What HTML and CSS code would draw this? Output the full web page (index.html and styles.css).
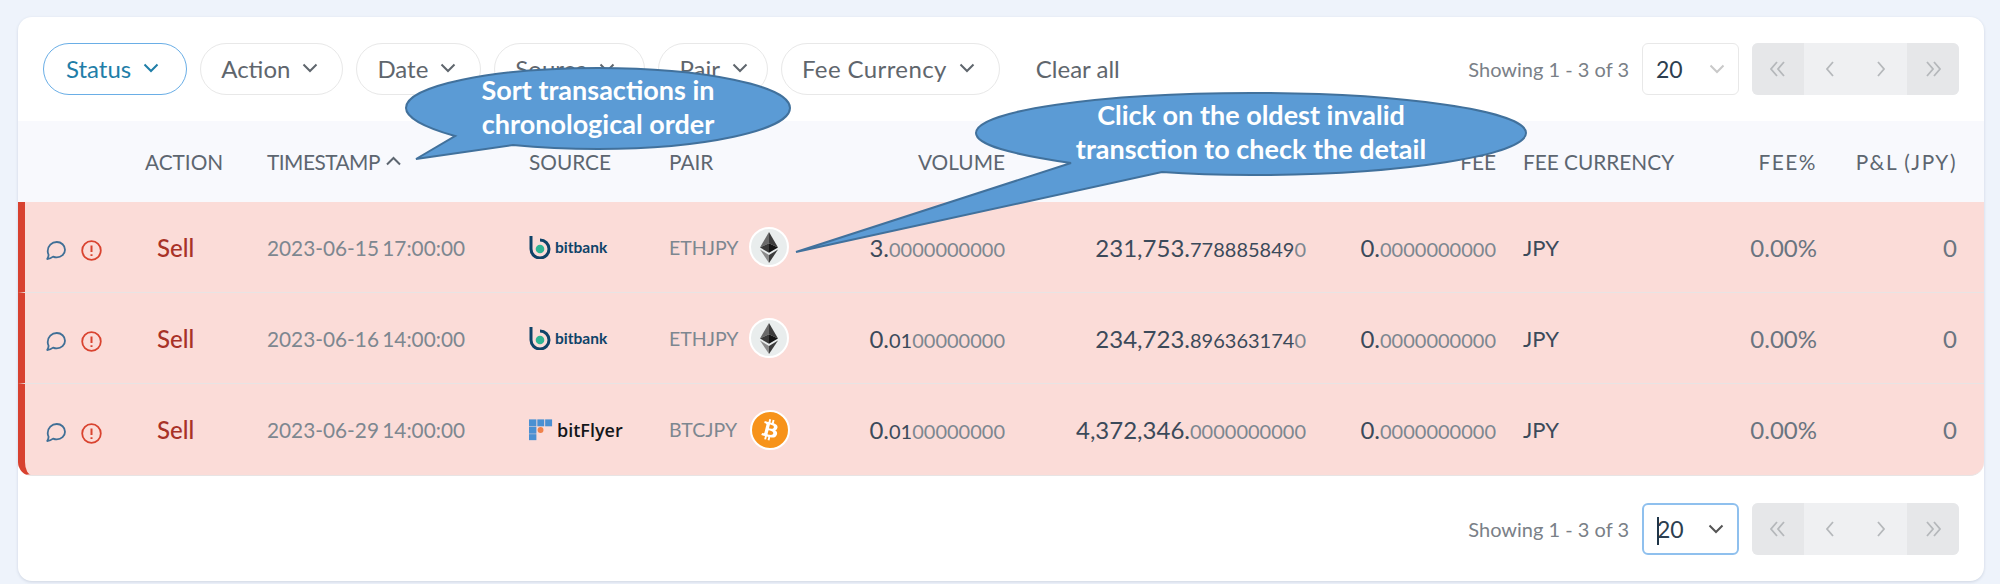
FILE: index.html
```html
<!DOCTYPE html>
<html>
<head>
    <meta charset="utf-8">
    <title>Transactions</title>
    <link rel="stylesheet" href="styles.css">
</head>
<body>
    <svg class="defs" width="0" height="0">
        <symbol id="chev" viewBox="0 0 16 10"><path d="M1.500 1.500 8 8l6.500-6.500" fill="none" stroke="currentColor" stroke-width="2"/></symbol>
        <symbol id="comment" viewBox="0 0 20 20"><path d="M10.800 1c4.500 0 8.200 3.400 8.200 7.700s-3.700 7.700-8.200 7.700c-1.300 0-2.600-.3-3.700-.8-1.600 1.300-3.500 2.200-5.900 2.400.9-1.300 1.300-2.700 1.400-4.100-.6-1.200-.9-2.600-.9-3.900C1.700 5.100 5.700 1 10.800 1z" fill="none" stroke="currentColor" stroke-width="1.800" stroke-linejoin="round"/></symbol>
        <symbol id="alert" viewBox="0 0 21 21"><circle cx="10.500" cy="10.500" r="9.300" fill="none" stroke="currentColor" stroke-width="1.800"/><path d="M10.500 5.500v6.500M10.500 14.200v1.800" stroke="currentColor" stroke-width="2"/></symbol>
        <symbol id="bitbank" viewBox="0 0 22 24"><path d="M2 1v13a9 9 0 1 0 9-9" fill="none" stroke="#0e4368" stroke-width="3"/><circle cx="11" cy="14" r="4.300" fill="#2fb594"/></symbol>
        <symbol id="bitflyer" viewBox="0 0 26 23">
            <rect x="0" y="0" width="8" height="7.500" fill="#4a90d2"/><rect x="9" y="0" width="7.500" height="7.500" fill="#4a90d2"/><rect x="17.500" y="0" width="7.500" height="7.500" fill="#4a90d2"/>
            <rect x="0" y="8" width="8" height="7.500" fill="#4a90d2"/><rect x="0" y="16" width="8" height="6.500" fill="#4a90d2"/>
            <circle cx="12.500" cy="11.500" r="3.200" fill="#f0824a"/>
        </symbol>
        <symbol id="eth" viewBox="0 0 18 31">
            <polygon points="9,0 0,15.500 9,11.200" fill="#6a6a6a"/><polygon points="9,0 18,15.500 9,11.200" fill="#3c3c3c"/>
            <polygon points="0,15.500 9,11.200 9,20.800" fill="#3a3a3a"/><polygon points="18,15.500 9,11.200 9,20.800" fill="#141414"/>
            <polygon points="0,17.500 9,31 9,23" fill="#8a8a8a"/><polygon points="18,17.500 9,31 9,23" fill="#3c3c3c"/>
        </symbol>
        <symbol id="btc" viewBox="0 0 24 24"><path fill="#fff" d="M17.288 10.291c.24-1.590-.974-2.450-2.640-3.030l.54-2.153-1.315-.33-.525 2.107c-.345-.087-.705-.167-1.064-.25l.526-2.127-1.320-.33-.54 2.165c-.285-.067-.565-.132-.84-.2l-1.815-.45-.35 1.407s.975.225.955.236c.535.136.63.486.615.766l-1.477 5.920c-.075.166-.24.406-.614.314.015.02-.96-.24-.96-.24l-.66 1.510 1.710.426.93.242-.54 2.190 1.320.327.54-2.170c.36.1.705.19 1.050.273l-.51 2.154 1.320.33.545-2.190c2.240.427 3.930.257 4.640-1.774.57-1.637-.03-2.580-1.217-3.196.854-.193 1.500-.76 1.680-1.930h.01zm-3.010 4.220c-.404 1.640-3.157.75-4.050.53l.72-2.900c.896.23 3.757.67 3.330 2.370zm.41-4.240c-.37 1.490-2.662.735-3.405.55l.654-2.640c.744.18 3.137.524 2.750 2.084v.006z"/></symbol>
    </svg>

    <div class="card">
        <div class="toolbar">
            <button class="pill active">Status <svg class="chev"><use href="#chev"/></svg></button>
            <button class="pill">Action <svg class="chev"><use href="#chev"/></svg></button>
            <button class="pill">Date <svg class="chev"><use href="#chev"/></svg></button>
            <button class="pill pill-source">Source <svg class="chev"><use href="#chev"/></svg></button>
            <button class="pill pill-pair">Pair <svg class="chev"><use href="#chev"/></svg></button>
            <button class="pill pill-fee">Fee Currency <svg class="chev"><use href="#chev"/></svg></button>
            <span class="clear">Clear all</span>
            <div class="paging">
                <span class="showing">Showing 1 - 3 of 3</span>
                <div class="size">20 <svg class="chev"><use href="#chev"/></svg></div>
                <div class="pager">
                    <span class="end"><svg viewBox="0 0 18 16"><path d="M8 1 2 8l6 7M15 1 9 8l6 7"/></svg></span>
                    <span><svg viewBox="0 0 18 16"><path d="M12 1 6 8l6 7"/></svg></span>
                    <span><svg viewBox="0 0 18 16"><path d="M6 1l6 7-6 7"/></svg></span>
                    <span class="end"><svg viewBox="0 0 18 16"><path d="M3 1l6 7-6 7M10 1l6 7-6 7"/></svg></span>
                </div>
            </div>
        </div>

        <div class="row head">
            <span></span>
            <span>ACTION</span>
            <span class="sorted">TIMESTAMP <svg viewBox="0 0 16 10"><path d="M1.500 8.500 8 2l6.500 6.500" fill="none" stroke="currentColor" stroke-width="2"/></svg></span>
            <span>SOURCE</span>
            <span>PAIR</span>
            <span class="num">VOLUME</span>
            <span></span>
            <span class="num">FEE</span>
            <span class="cur">FEE CURRENCY</span>
            <span class="num wide">FEE%</span>
            <span class="num wide">P&amp;L (JPY)</span>
        </div>

        <div class="row item">
            <span class="marks"><svg class="i-comment"><use href="#comment"/></svg><svg class="i-alert"><use href="#alert"/></svg></span>
            <span class="sell">Sell</span>
            <span class="time">2023-06-15 17:00:00</span>
            <span class="source"><svg class="bb"><use href="#bitbank"/></svg><b class="bb-name">bitbank</b></span>
            <span class="pair">ETHJPY <i class="coin"><svg class="eth"><use href="#eth"/></svg></i></span>
            <span class="num"><em>3.</em><small class="z">0000000000</small></span>
            <span class="num"><em>231,753.</em><small>778885849</small><small class="z">0</small></span>
            <span class="num"><em>0.</em><small class="z">0000000000</small></span>
            <span class="cur dark">JPY</span>
            <span class="num pct">0.00%</span>
            <span class="num pct">0</span>
        </div>
        <div class="row item">
            <span class="marks"><svg class="i-comment"><use href="#comment"/></svg><svg class="i-alert"><use href="#alert"/></svg></span>
            <span class="sell">Sell</span>
            <span class="time">2023-06-16 14:00:00</span>
            <span class="source"><svg class="bb"><use href="#bitbank"/></svg><b class="bb-name">bitbank</b></span>
            <span class="pair">ETHJPY <i class="coin"><svg class="eth"><use href="#eth"/></svg></i></span>
            <span class="num"><em>0.</em><small>01</small><small class="z">00000000</small></span>
            <span class="num"><em>234,723.</em><small>896363174</small><small class="z">0</small></span>
            <span class="num"><em>0.</em><small class="z">0000000000</small></span>
            <span class="cur dark">JPY</span>
            <span class="num pct">0.00%</span>
            <span class="num pct">0</span>
        </div>
        <div class="row item last">
            <span class="marks"><svg class="i-comment"><use href="#comment"/></svg><svg class="i-alert"><use href="#alert"/></svg></span>
            <span class="sell">Sell</span>
            <span class="time">2023-06-29 14:00:00</span>
            <span class="source"><svg class="bf"><use href="#bitflyer"/></svg><span class="bf-name">bitFlyer</span></span>
            <span class="pair">BTCJPY <i class="coin orange"><svg class="btc"><use href="#btc"/></svg></i></span>
            <span class="num"><em>0.</em><small>01</small><small class="z">00000000</small></span>
            <span class="num"><em>4,372,346.</em><small class="z">0000000000</small></span>
            <span class="num"><em>0.</em><small class="z">0000000000</small></span>
            <span class="cur dark">JPY</span>
            <span class="num pct">0.00%</span>
            <span class="num pct">0</span>
        </div>

        <div class="footer">
            <div class="paging">
                <span class="showing">Showing 1 - 3 of 3</span>
                <div class="size focus"><span class="caret"></span>20 <svg class="chev"><use href="#chev"/></svg></div>
                <div class="pager">
                    <span class="end"><svg viewBox="0 0 18 16"><path d="M8 1 2 8l6 7M15 1 9 8l6 7"/></svg></span>
                    <span><svg viewBox="0 0 18 16"><path d="M12 1 6 8l6 7"/></svg></span>
                    <span><svg viewBox="0 0 18 16"><path d="M6 1l6 7-6 7"/></svg></span>
                    <span class="end"><svg viewBox="0 0 18 16"><path d="M3 1l6 7-6 7M10 1l6 7-6 7"/></svg></span>
                </div>
            </div>
        </div>
    </div>

    <!-- annotations drawn over the screenshot -->
    <div class="callout sort">
        <svg viewBox="0 0 386 92"><path d="M50 69C18 60 1 50 1 41 1 19 87 1 193 1s192 18 192 40-86 41-192 41c-30 0-55-1-85-4L11 92z"/></svg>
        <p>Sort transactions in<br>chronological order</p>
    </div>
    <div class="callout click">
        <svg viewBox="0 0 552 160"><path d="M96 71C35 62 1 53 1 41 1 19 124 1 276 1s275 18 275 40-123 42-275 42c-32 0-62-1-89-3L-179 160z"/></svg>
        <p>Click on the oldest invalid<br>transction to check the detail</p>
    </div>
</body>
</html>
```

FILE: styles.css
```css
body {
    margin: 0;
    padding: 17px 16px 4px 18px;
    background-color: #eef3fb;
    font-family: Lato, sans-serif;
    color: #5f666d;
}
.defs {
    position: absolute;
}
.card {
    background: #fff;
    border-radius: 14px;
    box-shadow: 0 1px 3px rgba(60, 80, 110, 0.18);
}

/* filter bar */
.toolbar {
    display: flex;
    align-items: center;
    padding: 26px 25px;
    height: 52px;
}
.pill {
    display: flex;
    align-items: center;
    gap: 12px;
    height: 52px;
    margin-right: 13px;
    padding: 0 24px 2px 20px;
    background: #fff;
    border: 1.5px solid #e8e8e8;
    border-radius: 26px;
    font: 24px Lato, sans-serif;
    color: #5f666d;
}
.pill.active {
    padding-left: 22px;
    padding-right: 27px;
    border-color: #6aaee6;
    color: #1f7ea8;
}
.pill-source {
    padding-right: 29px;
}
.pill-pair {
    padding-right: 19px;
}
.pill-fee {
    letter-spacing: 0.400px;
}
.chev {
    width: 16px;
    height: 10px;
}
.clear {
    margin-left: 23px;
    padding-bottom: 2px;
    font-size: 24px;
}

/* paging */
.paging {
    display: flex;
    align-items: center;
    margin-left: auto;
}
.showing {
    margin-right: 13px;
    font-size: 20px;
    color: #7a8087;
}
.size {
    position: relative;
    display: flex;
    align-items: center;
    justify-content: space-between;
    box-sizing: border-box;
    width: 97px;
    height: 52px;
    margin-right: 13px;
    padding: 0 13px;
    border: 1.5px solid #e8e8e8;
    border-radius: 6px;
    font-size: 23px;
    color: #2c3e50;
}
.size .chev {
    color: #c9c9c9;
}
.size.focus {
    border: 2px solid #8fc0ee;
}
.size.focus .chev {
    color: #555;
}
.caret {
    position: absolute;
    left: 13px;
    top: 12px;
    width: 2px;
    height: 28px;
    background: #1f3548;
}
.pager {
    display: flex;
    width: 207px;
    height: 52px;
    border-radius: 6px;
    overflow: hidden;
    background: #eff0f2;
}
.pager span {
    display: flex;
    flex: 1;
    align-items: center;
    justify-content: center;
}
.pager .end {
    background: #e6e7e9;
}
.pager svg {
    width: 18px;
    height: 16px;
    fill: none;
    stroke: #b5b8bb;
    stroke-width: 1.800;
}

/* table */
.row {
    display: grid;
    grid-template-columns: 120px 122px 262px 140px 131px 205px 301px 190px 194px 127px 140px;
    align-items: center;
    border-left: 7px solid transparent;
}
.head {
    height: 81px;
    box-sizing: border-box;
    background: #f8f9fd;
    font-size: 20.800px;
    color: #5d6670;
}
.head .wide {
    letter-spacing: 1.500px;
}
.sorted {
    letter-spacing: -0.500px;
}
.sorted svg {
    width: 17px;
    height: 10px;
    margin-left: 1px;
    vertical-align: 4px;
}
.num {
    text-align: right;
}
.cur {
    padding-left: 27px;
}
.item {
    height: 91px;
    background: #fbdcd8;
    border-left-color: #d8412f;
    border-bottom: 1px solid #e8e4e4;
    box-sizing: border-box;
    font-size: 20px;
}
.item.last {
    height: 92px;
    border-bottom-left-radius: 14px;
    border-bottom-right-radius: 14px;
}
.marks {
    display: flex;
    align-items: center;
    gap: 15px;
    padding-left: 21px;
    padding-top: 7px;
}
.i-comment {
    width: 20px;
    height: 20px;
    color: #3f6f96;
}
.i-alert {
    width: 21px;
    height: 21px;
    color: #d9432f;
}
.sell {
    padding-left: 12px;
    font-size: 24px;
    font-weight: 500;
    color: #a83227;
}
.time {
    font-size: 20.800px;
    word-spacing: -2px;
    color: #7d8790;
}
.source {
    display: flex;
    align-items: center;
    gap: 4px;
}
.bb {
    width: 22px;
    height: 24px;
}
.bb-name {
    font-size: 15.500px;
    font-weight: 700;
    color: #0e4368;
}
.bf {
    width: 24px;
    height: 22px;
}
.bf-name {
    font-family: "Open Sans", sans-serif;
    font-size: 18px;
    font-weight: 600;
    color: #14171a;
}
.pair {
    display: flex;
    align-items: center;
    gap: 12px;
    font-size: 19.500px;
    color: #7d8790;
}
.coin {
    display: flex;
    align-items: center;
    justify-content: center;
    box-sizing: border-box;
    width: 40px;
    height: 40px;
    margin-left: -2px;
    background: #e9eded;
    border: 2px solid #fff;
    border-radius: 50%;
}
.coin.orange {
    margin-left: 1px;
    background: #f7931a;
}
.eth {
    width: 18px;
    height: 31px;
}
.btc {
    width: 34px;
    height: 34px;
}
.num em {
    font-style: normal;
    font-size: 24px;
    color: #3b4a5a;
}
.num small {
    font-size: 20px;
    color: #3b4a5a;
}
.num small.z {
    color: #7d8790;
}
.dark {
    font-size: 22px;
    color: #3b4a5a;
}
.pct {
    font-size: 24px;
    color: #6a7480;
}

.footer {
    display: flex;
    padding: 27px 25px 26px;
}

/* callouts */
.callout {
    position: absolute;
    margin: 0;
}
.callout svg {
    position: absolute;
    left: 0;
    top: 0;
    overflow: visible;
    fill: #5b9bd5;
    stroke: #41719c;
    stroke-width: 2;
}
.callout p {
    position: relative;
    margin: 0;
    padding-top: 6px;
    text-align: center;
    font-size: 27px;
    font-weight: 700;
    line-height: 34px;
    color: #fff;
}
.sort {
    left: 405px;
    top: 67px;
    width: 386px;
    height: 92px;
}
.sort svg {
    width: 386px;
    height: 92px;
}
.click {
    left: 975px;
    top: 92px;
    width: 552px;
    height: 83px;
}
.click svg {
    width: 552px;
    height: 160px;
}
```
